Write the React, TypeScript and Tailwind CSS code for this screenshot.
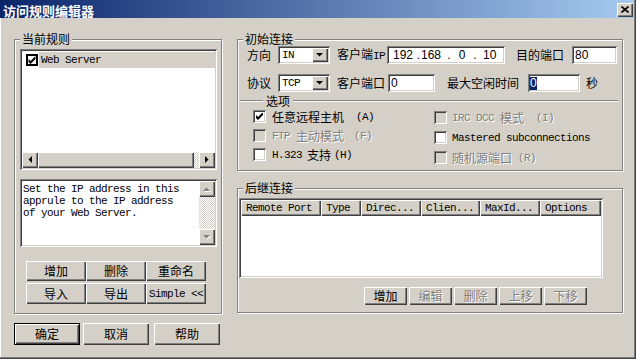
import React from "react";

const SUNKEN =
  "shadow-[inset_1px_1px_0_#808080,inset_-1px_-1px_0_#ffffff,inset_2px_2px_0_#404040,inset_-2px_-2px_0_#d4d0c8]";
const RAISED =
  "shadow-[inset_1px_1px_0_#ffffff,inset_-1px_-1px_0_#404040,inset_-2px_-2px_0_#808080]";
const MONO = "font-['Liberation_Mono',monospace] text-[11px] tracking-[-0.6px]";
const SANS = "font-['Liberation_Sans',Arial,sans-serif] text-[12px]";
const DIS = "text-[#808080] [text-shadow:1px_1px_0_#ffffff]";
const DITHER =
  "bg-[image:repeating-conic-gradient(#ffffff_0_25%,#d4d0c8_0_50%)] bg-[length:2px_2px]";

function Tri({ dir, disabled }: { dir: "up" | "down" | "left" | "right"; disabled?: boolean }) {
  const vert = dir === "up" || dir === "down";
  const w = vert ? 7 : 4;
  const h = vert ? 4 : 7;
  const pts =
    dir === "down"
      ? "0,0 7,0 3.5,3.5"
      : dir === "up"
      ? "3.5,0.5 7,4 0,4"
      : dir === "left"
      ? "0.5,3.5 4,0 4,7"
      : "0,0 3.5,3.5 0,7";
  return (
    <svg width={w + 1} height={h + 1} viewBox={`0 0 ${w + 1} ${h + 1}`}>
      {disabled && <polygon points={pts} fill="#ffffff" transform="translate(1,1)" />}
      <polygon points={pts} fill={disabled ? "#808080" : "#000000"} />
    </svg>
  );
}

function ArrowBtn({ dir, disabled, className = "" }: { dir: "up" | "down" | "left" | "right"; disabled?: boolean; className?: string }) {
  return (
    <div className={`flex shrink-0 items-center justify-center bg-[#d4d0c8] ${RAISED} ${className}`}>
      <Tri dir={dir} disabled={disabled} />
    </div>
  );
}

function Check({ checked, disabled }: { checked?: boolean; disabled?: boolean }) {
  return (
    <span className={`relative block h-[13px] w-[13px] shrink-0 ${SUNKEN} ${disabled ? "bg-[#d4d0c8]" : "bg-white"}`}>
      {checked && (
        <svg className="absolute left-[3px] top-[3px]" width="7" height="7" viewBox="0 0 7 7">
          <polygon points="0,2 2,4 7,-1 7,2 2,7 0,5" fill="#000000" />
        </svg>
      )}
    </span>
  );
}

function Btn({
  children,
  className = "",
  disabled,
  def,
}: {
  children: React.ReactNode;
  className?: string;
  disabled?: boolean;
  def?: boolean;
}) {
  return (
    <div
      className={`flex shrink-0 items-center justify-center bg-[#d4d0c8] leading-[12px] ${
        def ? "border border-black" : ""
      } ${RAISED} ${disabled ? DIS : ""} ${className}`}
    >
      {children}
    </div>
  );
}

function Group({ label, className, children }: { label: string; className: string; children?: React.ReactNode }) {
  return (
    <div className={`relative border border-[#808080] shadow-[inset_1px_1px_0_#ffffff,1px_1px_0_#ffffff] ${className}`}>
      <span className="absolute left-[5px] top-[-7px] bg-[#d4d0c8] px-[2px] leading-[12px]">{label}</span>
      {children}
    </div>
  );
}

function Combo({ value }: { value: string }) {
  return (
    <div className={`ml-[7px] flex h-[18px] w-[52px] shrink-0 bg-white p-[2px] ${SUNKEN}`}>
      <span className={`flex-1 pl-[2px] leading-[14px] ${MONO}`}>{value}</span>
      <ArrowBtn dir="down" className="h-[14px] w-[16px]" />
    </div>
  );
}

export default function App() {
  const cols: [string, string][] = [
    ["Remote Port", "w-[80px]"],
    ["Type", "w-[40px]"],
    ["Direc...", "w-[60px]"],
    ["Clien...", "w-[59px]"],
    ["MaxId...", "w-[60px]"],
    ["Options", "w-[61px]"],
  ];
  return (
    <div className="relative h-[359px] w-[636px] overflow-hidden bg-[#d4d0c8] font-['Noto_Sans_CJK_SC',sans-serif] text-[12px] leading-[12px] text-black shadow-[inset_-1px_-1px_0_#404040,inset_-2px_-2px_0_#808080,inset_1px_0_0_#ffffff]">
      {/* Title bar */}
      <div className="flex h-[18px] w-[634px] items-center justify-between bg-[linear-gradient(to_right,#0a246a,#a6caf0)]">
        <span className="ml-[3px] mt-[2px] text-[13px] font-bold leading-[13px] text-white">访问规则编辑器</span>
        <div className={`mr-[1px] mt-[1px] flex h-[14px] w-[16px] items-center justify-center bg-[#d4d0c8] ${RAISED}`}>
          <svg width="8" height="7" viewBox="0 0 8 7">
            <path d="M0.5 0.5L7.5 6.5M7.5 0.5L0.5 6.5" stroke="#000000" strokeWidth="1.6" />
          </svg>
        </div>
      </div>

      <div className="flex pl-[14px] pt-[21px]">
        {/* Left column */}
        <div className="flex w-[208px] shrink-0 flex-col">
          <Group label="当前规则" className="h-[275px] w-[208px] pl-[5px] pt-[9px]">
            {/* Listbox */}
            <div className={`flex h-[121px] w-[197px] flex-col bg-white p-[2px] ${SUNKEN}`}>
              <div className="flex-1">
                <div className="mt-[1px] flex h-[16px] items-center">
                  <span className="relative ml-[4px] block h-[12px] w-[12px] shrink-0 border-2 border-black bg-white">
                    <svg className="absolute left-[0px] top-[0px]" width="8" height="8" viewBox="0 0 8 8">
                      <polygon points="0.5,3 2.5,5 7.5,0 7.5,3 2.5,8 0.5,6" fill="#000000" />
                    </svg>
                  </span>
                  <span className={`ml-[1px] flex-1 bg-[#d4d0c8] pl-[2px] leading-[16px] ${MONO}`}>Web Server</span>
                </div>
              </div>
              <div className="flex h-[16px]">
                <ArrowBtn dir="left" className="h-[16px] w-[16px]" />
                <div className={`h-[16px] w-[156px] bg-[#d4d0c8] ${RAISED}`} />
                <div className={`flex-1 ${DITHER}`} />
                <ArrowBtn dir="right" className="h-[16px] w-[16px]" />
              </div>
            </div>

            {/* Description */}
            <div className={`mt-[9px] flex h-[68px] w-[197px] bg-white p-[2px] ${SUNKEN}`}>
              <div className={`flex-1 pl-[1px] pt-[2px] leading-[12px] ${MONO}`}>
                <div>Set the IP address in this</div>
                <div>apprule to the IP address</div>
                <div>of your Web Server.</div>
              </div>
              <div className="flex w-[16px] flex-col">
                <ArrowBtn dir="up" disabled className="h-[16px] w-[16px]" />
                <div className={`flex-1 ${DITHER}`} />
                <ArrowBtn dir="down" disabled className="h-[16px] w-[16px]" />
              </div>
            </div>

            <div className="ml-[6px] mt-[14px] flex">
              <Btn className="h-[20px] w-[60px]">增加</Btn>
              <Btn className="h-[20px] w-[60px]">删除</Btn>
              <Btn className="h-[20px] w-[60px]">重命名</Btn>
            </div>
            <div className="ml-[6px] mt-[2px] flex">
              <Btn className="h-[21px] w-[60px]">导入</Btn>
              <Btn className="h-[21px] w-[60px]">导出</Btn>
              <Btn className="h-[21px] w-[60px]">
                <span className={MONO}>Simple &lt;&lt;</span>
              </Btn>
            </div>
          </Group>

          <div className="mt-[9px] flex">
            <Btn def className="h-[22px] w-[66px]">确定</Btn>
            <Btn className="ml-[3px] h-[22px] w-[66px]">取消</Btn>
            <Btn className="ml-[5px] h-[22px] w-[66px]">帮助</Btn>
          </div>
        </div>

        {/* Right column */}
        <div className="ml-[15px] flex w-[386px] shrink-0 flex-col">
          <Group label="初始连接" className="h-[132px] w-[386px] pt-[6px]">
            <div className="flex h-[18px] items-center">
              <span className="ml-[9px] w-[24px] shrink-0">方向</span>
              <Combo value="IN" />
              <span className="ml-[7px] w-[48px] shrink-0 whitespace-nowrap">
                客户端<span className={MONO}>IP</span>
              </span>
              <div className={`ml-[2px] flex h-[18px] w-[118px] shrink-0 items-center bg-white pl-[3px] ${SUNKEN} ${SANS}`}>
                <span className="w-[26px] text-center">192</span>
                <span className="w-[5px] text-center">.</span>
                <span className="w-[20px] text-center">168</span>
                <span className="w-[16px] text-center">.</span>
                <span className="w-[10px] text-center">0</span>
                <span className="w-[16px] text-center">.</span>
                <span className="w-[12px] text-center">10</span>
              </div>
              <span className="ml-[11px] w-[48px] shrink-0">目的端口</span>
              <div className={`ml-[8px] flex h-[18px] w-[45px] shrink-0 items-center bg-white pl-[3px] ${SUNKEN} ${SANS}`}>80</div>
            </div>

            <div className="mt-[10px] flex h-[18px] items-center">
              <span className="ml-[9px] w-[24px] shrink-0">协议</span>
              <Combo value="TCP" />
              <span className="ml-[7px] w-[48px] shrink-0">客户端口</span>
              <div className={`ml-[3px] flex h-[18px] w-[47px] shrink-0 items-center bg-white pl-[3px] ${SUNKEN} ${SANS}`}>0</div>
              <span className="ml-[12px] w-[72px] shrink-0">最大空闲时间</span>
              <div className={`ml-[9px] flex h-[18px] w-[52px] shrink-0 items-center bg-white pl-[2px] ${SUNKEN} ${SANS}`}>
                <span className="bg-[#0a246a] leading-[13px] text-white">0</span>
              </div>
              <span className="ml-[6px] shrink-0">秒</span>
            </div>

            {/* separator */}
            <div className="mr-[4px] mt-[3px] flex h-[12px] items-center">
              <div className="ml-[2px] h-[2px] w-[23px] border-b border-t border-b-white border-t-[#808080]" />
              <span className="px-[3px] leading-[12px]">选项</span>
              <div className="h-[2px] flex-1 border-b border-t border-b-white border-t-[#808080]" />
            </div>

            <div className="mt-[3px] flex">
              <div className="ml-[15px] flex w-[181px] flex-col gap-[6px]">
                <div className="flex h-[13px] items-center">
                  <Check checked />
                  <span className="ml-[6px]">任意远程主机</span>
                  <span className={`ml-[12px] ${MONO}`}>(A)</span>
                </div>
                <div className={`flex h-[13px] items-center ${DIS}`}>
                  <Check disabled />
                  <span className={`ml-[6px] ${MONO}`}>FTP</span>
                  <span className="ml-[6px]">主动模式</span>
                  <span className={`ml-[10px] ${MONO}`}>(F)</span>
                </div>
                <div className="flex h-[13px] items-center">
                  <Check />
                  <span className={`ml-[6px] ${MONO}`}>H.323</span>
                  <span className="ml-[5px]">支持</span>
                  <span className={`ml-[3px] ${MONO}`}>(H)</span>
                </div>
              </div>
              <div className="mt-[1px] flex flex-col gap-[7px]">
                <div className={`flex h-[13px] items-center ${DIS}`}>
                  <Check disabled />
                  <span className={`ml-[5px] ${MONO}`}>IRC DCC</span>
                  <span className="ml-[6px]">模式</span>
                  <span className={`ml-[12px] ${MONO}`}>(I)</span>
                </div>
                <div className="flex h-[13px] items-center">
                  <Check />
                  <span className={`ml-[5px] ${MONO}`}>Mastered subconnections</span>
                </div>
                <div className={`flex h-[13px] items-center ${DIS}`}>
                  <Check disabled />
                  <span className="ml-[5px]">随机源端口</span>
                  <span className={`ml-[6px] ${MONO}`}>(R)</span>
                </div>
              </div>
            </div>
          </Group>

          <Group label="后继连接" className="mt-[17px] h-[125px] w-[386px] pt-[9px]">
            <div className={`ml-[1px] h-[80px] w-[364px] bg-white p-[2px] ${SUNKEN}`}>
              <div className="flex h-[16px]">
                {cols.map(([t, w]) => (
                  <div key={t} className={`${w} h-[16px] shrink-0 bg-[#d4d0c8] pl-[5px] leading-[16px] ${RAISED} ${MONO}`}>
                    {t}
                  </div>
                ))}
              </div>
            </div>
            <div className="mt-[9px] flex gap-[2px] pl-[126px]">
              <Btn className="h-[18px] w-[43px]">增加</Btn>
              <Btn disabled className="h-[18px] w-[43px]">编辑</Btn>
              <Btn disabled className="h-[18px] w-[43px]">删除</Btn>
              <Btn disabled className="h-[18px] w-[43px]">上移</Btn>
              <Btn disabled className="h-[18px] w-[43px]">下移</Btn>
            </div>
          </Group>
        </div>
      </div>
    </div>
  );
}
